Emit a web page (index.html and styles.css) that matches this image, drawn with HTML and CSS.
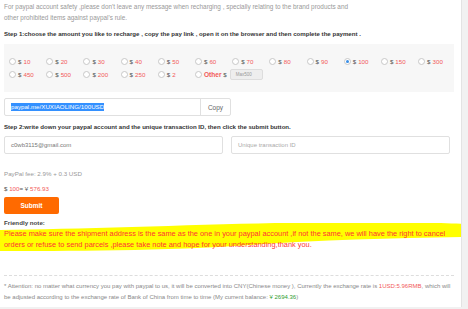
FILE: index.html
```html
<!DOCTYPE html>
<html lang="en">
<head>
  <meta charset="UTF-8">
  <title>Recharge</title>
  <link rel="stylesheet" href="styles.css">
</head>
<body>
  <div class="panel">
    <p class="tip">For paypal account safety ,please don't leave any message when recharging , specially relating to the brand products and other prohibited items against paypal's rule.</p>

    <p class="step">Step 1:choose the amount you like to recharge , copy the pay link , open it on the browser and then complete the payment .</p>

    <div class="amounts">
      <label class="amt"><span class="radio"></span>$ <em>10</em></label>
      <label class="amt"><span class="radio"></span>$ <em>20</em></label>
      <label class="amt"><span class="radio"></span>$ <em>30</em></label>
      <label class="amt"><span class="radio"></span>$ <em>40</em></label>
      <label class="amt"><span class="radio"></span>$ <em>50</em></label>
      <label class="amt"><span class="radio"></span>$ <em>60</em></label>
      <label class="amt"><span class="radio"></span>$ <em>70</em></label>
      <label class="amt"><span class="radio"></span>$ <em>80</em></label>
      <label class="amt"><span class="radio"></span>$ <em>90</em></label>
      <label class="amt"><span class="radio checked"></span>$ <em>100</em></label>
      <label class="amt"><span class="radio"></span>$ <em>150</em></label>
      <label class="amt"><span class="radio"></span>$ <em>300</em></label>
      <label class="amt"><span class="radio"></span>$ <em>450</em></label>
      <label class="amt"><span class="radio"></span>$ <em>500</em></label>
      <label class="amt"><span class="radio"></span>$ <em>200</em></label>
      <label class="amt"><span class="radio"></span>$ <em>250</em></label>
      <label class="amt"><span class="radio"></span>$ <em>2</em></label>
      <label class="amt other"><span class="radio"></span><b>Other</b>&nbsp;$ <span class="max">Max500</span></label>
    </div>

    <div class="link-row">
      <div class="link-field"><span class="sel">paypal.me/XUXIAOLING/100USD</span></div>
      <div class="copy">Copy</div>
    </div>

    <p class="step">Step 2:write down your paypal account and the unique transaction ID, then click the submit button.</p>

    <div class="fields">
      <div class="field">c0wb3115@gmail.com</div>
      <div class="field ph">Unique transaction ID</div>
    </div>

    <p class="fee">PayPal fee: 2.9% + 0.3 USD</p>
    <p class="total">$ <em>100</em>= ¥ <em>576.93</em></p>

    <div class="submit">Submit</div>

    <p class="note-title">Friendly note:</p>
    <div class="note">
      <svg class="marker" width="468" height="32" viewBox="0 0 468 32" preserveAspectRatio="none">
        <path d="M0 7 C90 6 240 0 330 -1 C400 -2 440 0 468 1 L468 14 C400 15 320 17 250 22 C170 28 60 28 0 28 Z" fill="#ffff00"/>
      </svg>
      <p>Please make sure the shipment address is the same as the one in your paypal account ,if not the same, we will have the right to cancel orders or refuse to send parcels ,please take note and hope for your understanding,thank you.</p>
    </div>

    <div class="attention">
      * Attention: no matter what currency you pay with paypal to us, it will be converted into CNY(Chinese money ), Currently the exchange rate is <span class="red">1USD:5.96RMB</span>, which will be adjusted according to the exchange rate of Bank of China from time to time (My current balance: <span class="green">¥ 2694.36</span>)
    </div>
  </div>
</body>
</html>
```

FILE: styles.css
```css
body {
  margin: 0;
  background: #f1f1f1;
  font-family: "Liberation Sans", Arial, sans-serif;
  color: #555;
}

p {
  margin: 0;
}

em {
  font-style: normal;
  color: #f25a5a;
}

.panel {
  width: 462px;
  height: 307px;
  box-sizing: border-box;
  background: #fff;
  border-right: 1px solid #e3e3e3;
  padding: 1px 4px 0 4px;
  overflow: hidden;
}

.tip {
  font-size: 6.4px;
  line-height: 11px;
  color: #999;
  width: 350px;
}

.step {
  font-size: 6.1px;
  font-weight: bold;
  color: #333;
  line-height: 11px;
  margin-top: 5px;
}

.amounts {
  margin-top: 5px;
  margin-right: 3px;
  background: #f7f7f7;
  height: 48px;
  box-sizing: border-box;
  padding: 11px 0 0 5px;
  display: grid;
  grid-template-columns: repeat(12, 37.2px);
  grid-auto-rows: 13px;
}

.amt {
  display: flex;
  align-items: center;
  font-size: 6.2px;
  color: #555;
  white-space: nowrap;
}

.amt em {
  margin-left: 2px;
}

.radio {
  flex-shrink: 0;
  width: 7px;
  height: 7px;
  border: 1px solid #c8c8c8;
  border-radius: 50%;
  background: #fff;
  box-sizing: border-box;
  margin-right: 2px;
  display: flex;
  align-items: center;
  justify-content: center;
}

.radio.checked::after {
  content: "";
  width: 3px;
  height: 3px;
  border-radius: 50%;
  background: #3a8ee6;
}

.other b {
  color: #f25a5a;
  font-size: 6.6px;
}

.max {
  flex-shrink: 0;
  display: inline-block;
  margin-left: 3px;
  width: 33px;
  height: 11px;
  line-height: 10px;
  box-sizing: border-box;
  border: 1px solid #ddd;
  border-radius: 2px;
  background: #eee;
  color: #999;
  font-size: 4.5px;
  padding-left: 5px;
}

.link-row {
  display: flex;
  width: 227px;
  height: 18px;
  margin-top: 6px;
  border: 1px solid #e0e0e0;
  border-radius: 2px;
  box-sizing: border-box;
}

.link-field {
  flex: 1;
  display: flex;
  align-items: center;
  padding-left: 6px;
  font-size: 6.2px;
}

.sel {
  background: #3390ff;
  color: #fff;
  line-height: 8px;
}

.copy {
  width: 29px;
  border-left: 1px solid #e0e0e0;
  display: flex;
  align-items: center;
  justify-content: center;
  font-size: 6.5px;
  color: #666;
}

.fields {
  display: flex;
  gap: 8px;
  margin-top: 4px;
}

.field {
  width: 219px;
  height: 18px;
  box-sizing: border-box;
  border: 1px solid #e0e0e0;
  border-radius: 2px;
  font-size: 6px;
  color: #777;
  padding-left: 6px;
  display: flex;
  align-items: center;
}

.field.ph {
  color: #aaa;
}

.fee {
  margin-top: 14px;
  font-size: 6.2px;
  color: #999;
  line-height: 11px;
}

.total {
  margin-top: 4px;
  font-size: 6.2px;
  color: #555;
  line-height: 11px;
}

.submit {
  margin-top: 3px;
  width: 55px;
  height: 17px;
  background: #ff6a00;
  border-radius: 2px;
  color: #fff;
  font-size: 6.5px;
  font-weight: bold;
  display: flex;
  align-items: center;
  justify-content: center;
}

.note-title {
  margin-top: 3px;
  font-size: 6.2px;
  font-weight: bold;
  color: #444;
  line-height: 11px;
}

.note {
  position: relative;
  margin: 0 -4px;
  padding: 0 4px;
}

.marker {
  position: absolute;
  left: 0;
  top: -5px;
}

.note p {
  position: relative;
  font-size: 7.4px;
  line-height: 11px;
  color: #f33;
}

.attention {
  margin-top: 25px;
  margin-right: 3px;
  border-top: 1px dashed #ddd;
  padding-top: 5px;
  font-size: 6px;
  line-height: 11px;
  color: #888;
}

.attention .red {
  color: #f25a5a;
}

.attention .green {
  color: #2f9e2f;
}
```
